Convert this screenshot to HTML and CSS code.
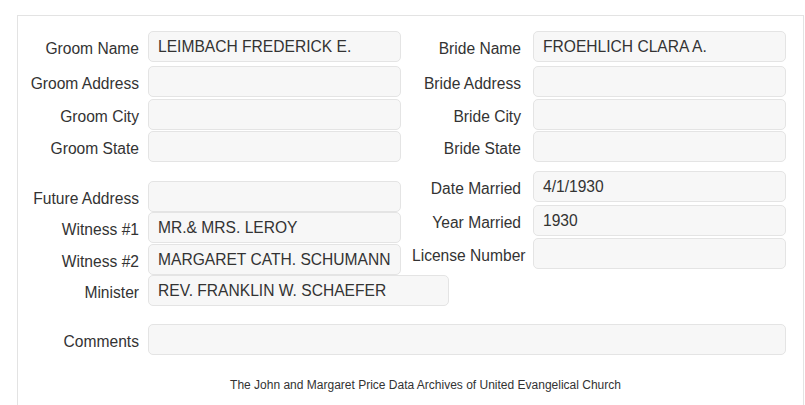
FILE: index.html
```html
<!DOCTYPE html>
<html lang="en">
<head>
<meta charset="utf-8">
<title>Marriage Record</title>
<link rel="stylesheet" href="styles.css">
</head>
<body>
<div class="panel">
  <div class="columns">
    <div class="col col-left">
      <div class="row"><label class="label">Groom Name</label><div class="field">LEIMBACH FREDERICK E.</div></div>
      <div class="row mt4"><label class="label">Groom Address</label><div class="field"></div></div>
      <div class="row mt2"><label class="label">Groom City</label><div class="field"></div></div>
      <div class="row mt1"><label class="label">Groom State</label><div class="field"></div></div>
      <div class="row mt19"><label class="label">Future Address</label><div class="field"></div></div>
      <div class="row"><label class="label">Witness #1</label><div class="field">MR.&amp; MRS. LEROY</div></div>
      <div class="row mt1"><label class="label">Witness #2</label><div class="field">MARGARET CATH. SCHUMANN</div></div>
      <div class="row"><label class="label">Minister</label><div class="field field-wide">REV. FRANKLIN W. SCHAEFER</div></div>
    </div>
    <div class="col col-right">
      <div class="row"><label class="label">Bride Name</label><div class="field">FROEHLICH CLARA A.</div></div>
      <div class="row mt4"><label class="label">Bride Address</label><div class="field"></div></div>
      <div class="row mt2"><label class="label">Bride City</label><div class="field"></div></div>
      <div class="row mt1"><label class="label">Bride State</label><div class="field"></div></div>
      <div class="row mt9"><label class="label">Date Married</label><div class="field">4/1/1930</div></div>
      <div class="row mt3"><label class="label">Year Married</label><div class="field">1930</div></div>
      <div class="row mt2"><label class="label">License Number</label><div class="field"></div></div>
    </div>
  </div>
  <div class="row row-comments"><label class="label">Comments</label><div class="field"></div></div>
  <div class="footer">The John and Margaret Price Data Archives of United Evangelical Church</div>
</div>
</body>
</html>
```
FILE: styles.css
```css
html, body {
  margin: 0;
  padding: 0;
  background: #ffffff;
}
body {
  font-family: "Liberation Sans", Arial, sans-serif;
  color: #333333;
  overflow: hidden;
}
.panel {
  margin: 15px 0 0 17px;
  width: 787px;
  height: 390px;
  border: 1px solid #e3e3e3;
  border-bottom: none;
  padding-top: 15px;
  box-sizing: border-box;
}
.columns {
  display: flex;
}
.col {
  display: flex;
  flex-direction: column;
}
.col-left {
  width: 383px;
}
.col-left .row {
  grid-template-columns: 121px 253px;
  column-gap: 9px;
}
.col-right {
  margin-left: 11px;
  width: 374px;
}
.col-right .row {
  grid-template-columns: 109px 253px;
  column-gap: 12px;
}
.row {
  display: grid;
  height: 31px;
}
.mt1 { margin-top: 1px; }
.mt2 { margin-top: 2px; }
.mt3 { margin-top: 3px; }
.mt4 { margin-top: 4px; }
.mt9 { margin-top: 9px; }
.mt19 { margin-top: 19px; }
.label {
  display: block;
  height: 31px;
  line-height: 35px;
  font-size: 15.6px;
  text-align: right;
  white-space: nowrap;
  color: #333333;
}
.field {
  height: 31px;
  box-sizing: border-box;
  border: 1px solid #e4e4e4;
  border-radius: 5px;
  background: #f7f7f7;
  padding: 0 9px;
  font-size: 15.6px;
  line-height: 30px;
  white-space: nowrap;
  overflow: hidden;
  color: #333333;
}
.field-wide {
  width: 301px;
  overflow: visible;
}
.row-comments {
  margin-top: 18px;
  grid-template-columns: 121px 638px;
  column-gap: 9px;
}
.footer {
  margin-top: 22px;
  padding-left: 30px;
  text-align: center;
  font-size: 12px;
  line-height: 16px;
  color: #333333;
}
```
